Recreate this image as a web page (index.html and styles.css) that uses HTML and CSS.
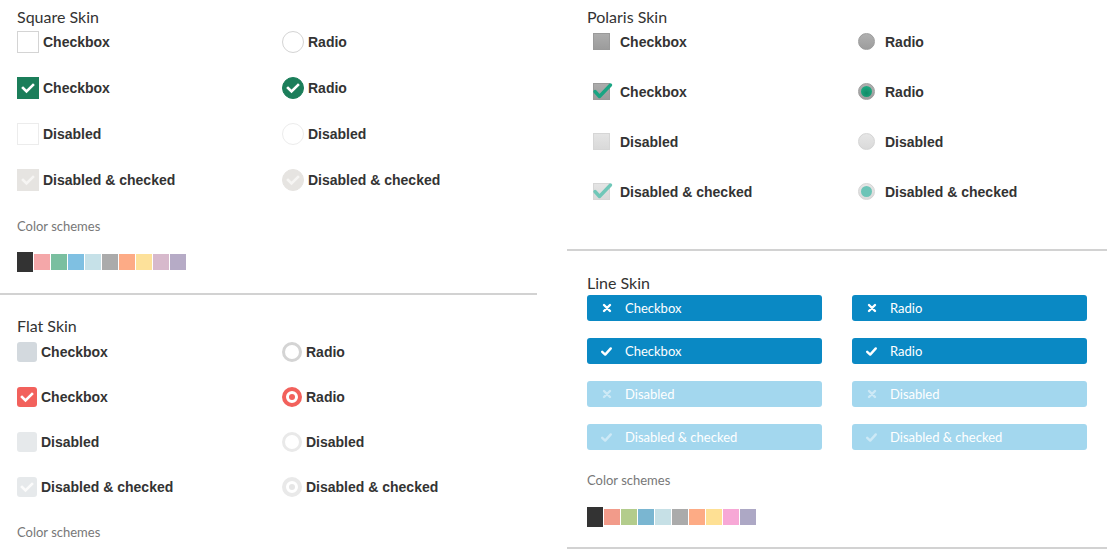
FILE: index.html
```html
<!DOCTYPE html>
<html>
<head>
<meta charset="utf-8">
<link rel="stylesheet" href="styles.css">
</head>
<body>
<div class="page">
  <div class="col col-left">
    <section class="skin skin-square">
      <h2 class="skin-title">Square Skin</h2>
      <div class="grid grid-square">
        <div class="item"><span class="sq sq-box"></span>Checkbox</div>
        <div class="item"><span class="sq sq-radio"></span>Radio</div>
        <div class="item"><span class="sq sq-box is-checked"><svg viewBox="0 0 22 22"><path d="M6 11 L9.5 14.5 L16 8" /></svg></span>Checkbox</div>
        <div class="item"><span class="sq sq-radio is-checked"><svg viewBox="0 0 22 22"><path d="M6 11 L9.5 14.5 L16 8" /></svg></span>Radio</div>
        <div class="item"><span class="sq sq-box is-disabled"></span>Disabled</div>
        <div class="item"><span class="sq sq-radio is-disabled"></span>Disabled</div>
        <div class="item"><span class="sq sq-box is-dischecked"><svg viewBox="0 0 22 22"><path d="M6 11 L9.5 14.5 L16 8" /></svg></span>Disabled &amp; checked</div>
        <div class="item"><span class="sq sq-radio is-dischecked"><svg viewBox="0 0 22 22"><path d="M6 11 L9.5 14.5 L16 8" /></svg></span>Disabled &amp; checked</div>
      </div>
      <div class="schemes-title schemes-title-square">Color schemes</div>
      <div class="swatches">
        <span class="sw sw-active" style="background:#333333"></span>
        <span class="sw" style="background:#f4a7a9"></span>
        <span class="sw" style="background:#7abfa0"></span>
        <span class="sw" style="background:#7fc0e2"></span>
        <span class="sw" style="background:#c6e1e8"></span>
        <span class="sw" style="background:#ababab"></span>
        <span class="sw" style="background:#fdab86"></span>
        <span class="sw" style="background:#fde19a"></span>
        <span class="sw" style="background:#d7b9cc"></span>
        <span class="sw" style="background:#b6abc6"></span>
      </div>
    </section>
    <hr class="divider">
    <section class="skin skin-flat">
      <h2 class="skin-title">Flat Skin</h2>
      <div class="grid grid-flat">
        <div class="item"><span class="fl fl-box"></span>Checkbox</div>
        <div class="item"><span class="fl fl-radio"></span>Radio</div>
        <div class="item"><span class="fl fl-box is-checked"><svg viewBox="0 0 20 20"><path d="M5 10 L8.5 13.5 L15 7" /></svg></span>Checkbox</div>
        <div class="item"><span class="fl fl-radio is-checked"><span class="dot"></span></span>Radio</div>
        <div class="item"><span class="fl fl-box is-disabled"></span>Disabled</div>
        <div class="item"><span class="fl fl-radio is-disabled"></span>Disabled</div>
        <div class="item"><span class="fl fl-box is-dischecked"><svg viewBox="0 0 20 20"><path d="M5 10 L8.5 13.5 L15 7" /></svg></span>Disabled &amp; checked</div>
        <div class="item"><span class="fl fl-radio is-dischecked"><span class="dot"></span></span>Disabled &amp; checked</div>
      </div>
      <div class="schemes-title schemes-title-flat">Color schemes</div>
    </section>
  </div>

  <div class="col col-right">
    <section class="skin skin-polaris">
      <h2 class="skin-title">Polaris Skin</h2>
      <div class="grid grid-polaris">
        <div class="item"><span class="po"><span class="po-box"></span></span>Checkbox</div>
        <div class="item"><span class="po"><span class="po-radio"></span></span>Radio</div>
        <div class="item"><span class="po"><span class="po-box"></span><svg class="po-check" viewBox="0 0 29 29"><path d="M8 14.5 L12.5 19.5 L23.5 8" /></svg></span>Checkbox</div>
        <div class="item"><span class="po"><span class="po-radio"><span class="po-dot"></span></span></span>Radio</div>
        <div class="item"><span class="po"><span class="po-box is-disabled"></span></span>Disabled</div>
        <div class="item"><span class="po"><span class="po-radio is-disabled"></span></span>Disabled</div>
        <div class="item"><span class="po"><span class="po-box is-disabled"></span><svg class="po-check is-disabled" viewBox="0 0 29 29"><path d="M8 14.5 L12.5 19.5 L23.5 8" /></svg></span>Disabled &amp; checked</div>
        <div class="item"><span class="po"><span class="po-radio is-disabled"><span class="po-dot is-disabled"></span></span></span>Disabled &amp; checked</div>
      </div>
    </section>
    <hr class="divider">
    <section class="skin skin-line">
      <h2 class="skin-title">Line Skin</h2>
      <div class="grid grid-line">
        <div class="line"><svg class="line-ico" viewBox="0 0 8 8"><path d="M1 1 L7 7 M7 1 L1 7" /></svg>Checkbox</div>
        <div class="line"><svg class="line-ico" viewBox="0 0 8 8"><path d="M1 1 L7 7 M7 1 L1 7" /></svg>Radio</div>
        <div class="line"><svg class="line-ico line-ico-check" viewBox="0 0 11 9"><path d="M1.2 4.8 L4.2 7.6 L9.8 1.4" /></svg>Checkbox</div>
        <div class="line"><svg class="line-ico line-ico-check" viewBox="0 0 11 9"><path d="M1.2 4.8 L4.2 7.6 L9.8 1.4" /></svg>Radio</div>
        <div class="line is-disabled"><svg class="line-ico" viewBox="0 0 8 8"><path d="M1 1 L7 7 M7 1 L1 7" /></svg>Disabled</div>
        <div class="line is-disabled"><svg class="line-ico" viewBox="0 0 8 8"><path d="M1 1 L7 7 M7 1 L1 7" /></svg>Disabled</div>
        <div class="line is-disabled"><svg class="line-ico line-ico-check" viewBox="0 0 11 9"><path d="M1.2 4.8 L4.2 7.6 L9.8 1.4" /></svg>Disabled &amp; checked</div>
        <div class="line is-disabled"><svg class="line-ico line-ico-check" viewBox="0 0 11 9"><path d="M1.2 4.8 L4.2 7.6 L9.8 1.4" /></svg>Disabled &amp; checked</div>
      </div>
      <div class="schemes-title schemes-title-line">Color schemes</div>
      <div class="swatches">
        <span class="sw sw-active" style="background:#333333"></span>
        <span class="sw" style="background:#f29b8a"></span>
        <span class="sw" style="background:#b3cc8c"></span>
        <span class="sw" style="background:#7ab6d1"></span>
        <span class="sw" style="background:#c6e0e6"></span>
        <span class="sw" style="background:#ababab"></span>
        <span class="sw" style="background:#fdab85"></span>
        <span class="sw" style="background:#fee094"></span>
        <span class="sw" style="background:#f7a8d6"></span>
        <span class="sw" style="background:#ada8c5"></span>
      </div>
    </section>
    <hr class="divider">
  </div>
</div>
</body>
</html>
```

FILE: styles.css
```css
* { box-sizing: border-box; }
html, body { margin: 0; padding: 0; background: #fff; }
body { font-family: "Liberation Sans", Arial, sans-serif; color: #333; }

.page { display: flex; gap: 30px; width: 1109px; }
.col-left { width: 537px; flex: none; }
.col-right { width: 540px; flex: none; }

.divider { margin: 0; border: 0; height: 2px; background: #d2d2d2; }

.skin-title {
  margin: 0;
  font-family: Lato, "Open Sans", sans-serif;
  font-weight: 400;
  font-size: 16px;
  line-height: 20px;
  color: #333;
}

.grid { display: grid; grid-template-columns: 265px 265px; }

.item {
  display: flex;
  align-items: center;
  gap: 4px;
  font-weight: 700;
  font-size: 14px;
  color: #333;
  white-space: nowrap;
}

.schemes-title {
  font-family: Lato, "Open Sans", sans-serif;
  font-size: 13px;
  line-height: 18px;
  color: #777;
  margin-top: 25px;
}
.schemes-title-square { margin-top: 26px; }
.schemes-title-flat { margin-top: 26px; }
.schemes-title-line { margin-top: 21px; }

.swatches { display: flex; align-items: center; gap: 1px; height: 20px; margin-top: 18px; }
.schemes-title-square + .swatches { margin-top: 17px; }
.sw { width: 16px; height: 16px; display: block; }
.sw-active { height: 20px; }

/* ---------- Square ---------- */
.skin-square { padding: 7px 0 21px 17px; }
.grid-square { margin-top: 4px; grid-auto-rows: 22px; row-gap: 24px; }
.sq {
  width: 22px; height: 22px; flex: none; display: block;
  border: 1px solid #d4d4d4; background: #fff;
}
.sq svg { display: block; width: 22px; height: 22px; margin: -1px; }
.sq path { fill: none; stroke: #fff; stroke-width: 2.6; stroke-linecap: square; }
.sq-radio { border-radius: 50%; }
.sq.is-checked { background: #1b7e5a; border-color: #1b7e5a; }
.sq.is-disabled { border-color: #ececec; }
.sq.is-dischecked { background: #e6e4e1; border-color: #e6e4e1; }
.sq.is-dischecked path { stroke: #f6f5f3; }

/* ---------- Flat ---------- */
.skin-flat { padding: 21px 0 0 17px; }
.grid-flat { margin-top: 6px; grid-auto-rows: 20px; row-gap: 25px; }
.fl { width: 20px; height: 20px; flex: none; display: block; position: relative; }
.fl-box { border-radius: 3px; background: #d3d9de; }
.fl-box svg { display: block; width: 20px; height: 20px; }
.fl-box path { fill: none; stroke: #fff; stroke-width: 2.6; stroke-linecap: square; }
.fl-box.is-checked { background: #f2615c; }
.fl-box.is-disabled { background: #e6e9eb; }
.fl-box.is-dischecked { background: #e6e9eb; }
.fl-box.is-dischecked path { stroke: #fbfbfb; }
.fl-radio { border-radius: 50%; border: 3px solid #d4d4d4; background: #fff; }
.fl-radio.is-checked { border: 4px solid #f2615c; }
.fl-radio.is-disabled { border-color: #e9e9e9; }
.fl-radio.is-dischecked { border: 4px solid #e9e9e9; }
.fl-radio .dot {
  position: absolute; left: 50%; top: 50%;
  width: 6px; height: 6px; margin: -3px 0 0 -3px;
  border-radius: 50%; background: #f2615c;
}
.fl-radio.is-dischecked .dot { background: #e6e6e6; }

/* ---------- Polaris ---------- */
.skin-polaris { padding: 7px 0 43px 20px; }
.grid-polaris { margin-top: 0; grid-auto-rows: 29px; row-gap: 21px; }
.po { width: 29px; height: 29px; flex: none; position: relative; display: block; }
.po-box {
  position: absolute; left: 6px; top: 6px; width: 17px; height: 17px;
  background: linear-gradient(#acacac, #9c9c9c);
  border: 1px solid #9a9a9a;
}
.po-box.is-disabled { background: linear-gradient(#e4e4e4, #d9d9d9); border-color: #d6d6d6; }
.po-radio {
  position: absolute; left: 6px; top: 6px; width: 17px; height: 17px;
  border-radius: 50%;
  background: linear-gradient(#b0b0b0, #9d9d9d);
  border: 1px solid #9c9c9c;
}
.po-radio.is-disabled { background: linear-gradient(#e6e6e6, #dadada); border-color: #d4d4d4; }
.po-dot {
  position: absolute; left: 2px; top: 2px; width: 11px; height: 11px; border-radius: 50%;
  background: radial-gradient(circle at 50% 65%, #0f8a66, #24b38a);
}
.po-dot.is-disabled { background: #6cc4b7; }
.po-check { position: absolute; left: 0; top: 0; width: 29px; height: 29px; }
.po-check path { fill: none; stroke: #1aa583; stroke-width: 3.4; stroke-linecap: round; stroke-linejoin: round; }
.po-check.is-disabled path { stroke: #6fc7b8; }

/* ---------- Line ---------- */
.skin-line { padding: 22px 0 20px 20px; }
.grid-line { margin-top: 2px; grid-auto-rows: 26px; row-gap: 17px; grid-template-columns: 235px 235px; column-gap: 30px; }
.line {
  display: flex; align-items: center; gap: 14px;
  padding-left: 16px;
  background: #0a89c4;
  border-radius: 3px;
  font-family: Lato, "Open Sans", sans-serif;
  font-size: 13px;
  color: #fff;
  white-space: nowrap;
}
.line-ico { width: 8px; height: 8px; display: block; flex: none; overflow: visible; }
.line-ico-check { width: 11px; height: 9px; margin-left: -2px; margin-right: -1px; }
.line-ico path { fill: none; stroke: #fff; stroke-width: 2.4; stroke-linecap: round; stroke-linejoin: round; }
.line.is-disabled { background: #a3d7ee; }
.line.is-disabled .line-ico path { stroke: #cde9f6; }
```
